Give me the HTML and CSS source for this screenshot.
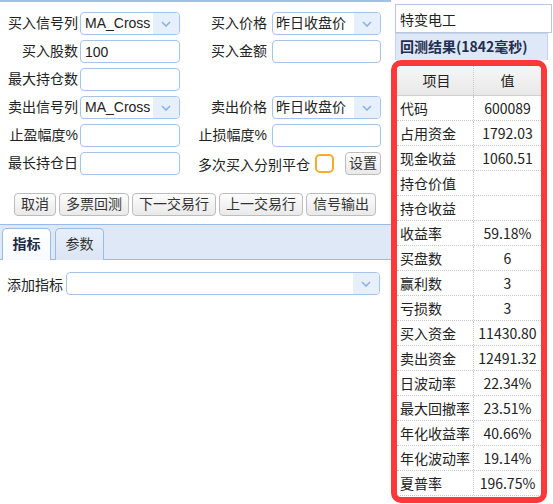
FILE: index.html
```html
<!DOCTYPE html>
<html lang="zh-CN">
<head>
    <meta charset="UTF-8">
    <title>回测</title>
    <link rel="stylesheet" href="styles.css">
</head>
<body>

    <!-- 左侧：回测参数 -->
    <div class="left-panel">
        <div class="form-grid">
            <label class="lbl">买入信号列</label>
            <div class="combo"><span class="combo-text">MA_Cross</span><span class="combo-arrow"><svg width="10" height="6" viewBox="0 0 10 6"><path d="M1 1l4 4 4-4" fill="none" stroke="#8db0de" stroke-width="1.6"/></svg></span></div>
            <label class="lbl lbl2">买入价格</label>
            <div class="combo"><span class="combo-text cn">昨日收盘价</span><span class="combo-arrow"><svg width="10" height="6" viewBox="0 0 10 6"><path d="M1 1l4 4 4-4" fill="none" stroke="#8db0de" stroke-width="1.6"/></svg></span></div>

            <label class="lbl">买入股数</label>
            <input class="field" type="text" value="100">
            <label class="lbl lbl2">买入金额</label>
            <input class="field" type="text">

            <label class="lbl">最大持仓数</label>
            <input class="field" type="text">
            <span></span>
            <span></span>

            <label class="lbl">卖出信号列</label>
            <div class="combo"><span class="combo-text">MA_Cross</span><span class="combo-arrow"><svg width="10" height="6" viewBox="0 0 10 6"><path d="M1 1l4 4 4-4" fill="none" stroke="#8db0de" stroke-width="1.6"/></svg></span></div>
            <label class="lbl lbl2">卖出价格</label>
            <div class="combo"><span class="combo-text cn">昨日收盘价</span><span class="combo-arrow"><svg width="10" height="6" viewBox="0 0 10 6"><path d="M1 1l4 4 4-4" fill="none" stroke="#8db0de" stroke-width="1.6"/></svg></span></div>

            <label class="lbl">止盈幅度%</label>
            <input class="field" type="text">
            <label class="lbl lbl2">止损幅度%</label>
            <input class="field" type="text">

            <label class="lbl">最长持仓日</label>
            <input class="field" type="text">
            <div class="multi-close">
                <span>多次买入分别平仓</span>
                <span class="check"></span>
                <button class="btn btn-set">设置</button>
            </div>
        </div>

        <div class="btn-row">
            <button class="btn">取消</button>
            <button class="btn">多票回测</button>
            <button class="btn">下一交易行</button>
            <button class="btn">上一交易行</button>
            <button class="btn">信号输出</button>
        </div>

        <!-- 标签页 -->
        <div class="tab-bar">
            <div class="tab active">指标</div>
            <div class="tab">参数</div>
        </div>

        <div class="add-row">
            <label class="add-lbl">添加指标</label>
            <div class="combo combo-wide"><span class="combo-text"></span><span class="combo-arrow"><svg width="10" height="6" viewBox="0 0 10 6"><path d="M1 1l4 4 4-4" fill="none" stroke="#8db0de" stroke-width="1.6"/></svg></span></div>
        </div>
    </div>

    <!-- 右侧：回测结果 -->
    <div class="right-panel">
        <input class="stock-name" type="text" value="特变电工">
        <div class="result-title">回测结果(1842毫秒)</div>
        <div class="result-box">
            <div class="grid-head">
                <div class="cell c1">项目</div>
                <div class="cell c2">值</div>
            </div>
            <div class="grid-body" id="resultGrid"></div>
        </div>
    </div>

    <script>
        // 回测结果数据
        const results = [
            ['代码', '600089'],
            ['占用资金', '1792.03'],
            ['现金收益', '1060.51'],
            ['持仓价值', ''],
            ['持仓收益', ''],
            ['收益率', '59.18%'],
            ['买盘数', '6'],
            ['赢利数', '3'],
            ['亏损数', '3'],
            ['买入资金', '11430.80'],
            ['卖出资金', '12491.32'],
            ['日波动率', '22.34%'],
            ['最大回撤率', '23.51%'],
            ['年化收益率', '40.66%'],
            ['年化波动率', '19.14%'],
            ['夏普率', '196.75%']
        ];

        const grid = document.getElementById('resultGrid');
        results.forEach(([name, value]) => {
            const row = document.createElement('div');
            row.className = 'grid-row';
            row.innerHTML = '<div class="cell c1">' + name + '</div><div class="cell c2">' + value + '</div>';
            grid.appendChild(row);
        });
    </script>

</body>
</html>
```

FILE: styles.css
```css
/* 基础样式 */
* {
    margin: 0;
    padding: 0;
    box-sizing: border-box;
}

body {
    width: 553px;
    height: 504px;
    overflow: hidden;
    display: flex;
    background: #fff;
    color: #222;
    font-family: 'Liberation Sans', 'Noto Sans CJK SC', sans-serif;
    font-size: 14px;
}

/* 左侧面板 */
.left-panel {
    flex: none;
    width: 391px;
    border-top: 2px solid #a3c0e8;
}

.form-grid {
    display: grid;
    grid-template-columns: 78px 100px 88px 109px;
    grid-auto-rows: 23px;
    column-gap: 2px;
    row-gap: 5px;
    padding-top: 10px;
}

.lbl {
    text-align: right;
    line-height: 23px;
    white-space: nowrap;
}

.lbl2 {
    padding-right: 3px;
}

.field {
    width: 100%;
    height: 23px;
    border: 1px solid #a6c3ea;
    border-radius: 4px;
    padding: 0 4px;
    font-family: 'Liberation Sans', 'Noto Sans CJK SC', sans-serif;
    font-size: 14px;
    color: #222;
    outline: none;
}

/* 下拉框 */
.combo {
    display: flex;
    height: 23px;
    border: 1px solid #a6c3ea;
    border-radius: 4px;
    overflow: hidden;
}

.combo-text {
    flex: 1;
    padding-left: 4px;
    line-height: 21px;
    white-space: nowrap;
}

.combo-text.cn {
    padding-left: 3px;
}

.combo-arrow {
    width: 26px;
    background: #e6f0fc;
    display: flex;
    justify-content: center;
    align-items: center;
}

.multi-close {
    grid-column: 3 / 5;
    display: flex;
    justify-content: flex-end;
    align-items: center;
    white-space: nowrap;
}

.check {
    width: 19px;
    height: 19px;
    border: 2px solid #f7aa2e;
    border-radius: 5px;
    margin-left: 5px;
    margin-right: 11px;
}

/* 按钮 */
.btn {
    height: 23px;
    padding: 0 6px;
    border: 1px solid #bdbdbd;
    border-radius: 4px;
    background: linear-gradient(#fdfdfd, #e9e9e9);
    color: #333;
    font-family: 'Liberation Sans', 'Noto Sans CJK SC', sans-serif;
    font-size: 14px;
    line-height: 21px;
}

.btn-set {
    width: 36px;
    padding: 0;
}

.btn-row {
    display: flex;
    gap: 3px;
    padding-left: 14px;
    margin-top: 18px;
}

/* 标签页 */
.tab-bar {
    display: flex;
    gap: 4px;
    margin-top: 8px;
    padding: 3px 0 0 2px;
    height: 36px;
    background: #dfe8f6;
    border-top: 1px solid #99bbe8;
    border-bottom: 1px solid #99bbe8;
}

.tab {
    width: 49px;
    height: 32px;
    border: 1px solid #99bbe8;
    border-bottom: none;
    border-radius: 5px 5px 0 0;
    text-align: center;
    line-height: 30px;
    color: #333;
    background: linear-gradient(#e8effa, #dbe5f4);
}

.tab.active {
    background: linear-gradient(#fff, #f7faff);
    font-weight: bold;
    color: #1b2a44;
}

.add-row {
    display: flex;
    align-items: center;
    margin-top: 12px;
    padding-left: 7px;
}

.add-lbl {
    width: 59px;
    white-space: nowrap;
}

.combo-wide {
    width: 314px;
}

/* 右侧面板 */
.right-panel {
    flex: 1;
    min-width: 0;
    display: flex;
    flex-direction: column;
}

.stock-name {
    min-width: 0;
    height: 29px;
    margin: 4px 1px 0 4px;
    border: 1px solid #b9c8dc;
    padding: 0 4px;
    font-family: 'Noto Sans CJK SC', sans-serif;
    font-size: 14px;
    color: #222;
    outline: none;
}

.result-title {
    height: 27px;
    margin: 0 5px 0 4px;
    padding-left: 4px;
    background: #dfe8f6;
    border: 1px solid #c3d5ee;
    border-bottom: none;
    line-height: 25px;
    font-family: 'Noto Sans CJK SC', sans-serif;
    font-weight: bold;
    color: #1e2f50;
}

/* 结果表格 */
.result-box {
    width: 156px;
    height: 443px;
    border: 6px solid #fd3838;
    border-radius: 10px;
    font-family: 'Noto Sans CJK SC', sans-serif;
    overflow: hidden;
}

.grid-head {
    display: flex;
    height: 30px;
    background: linear-gradient(#f7f7f7, #e8e8e8);
    border-bottom: 1px solid #d0d0d0;
}

.grid-head .cell {
    text-align: center;
    line-height: 29px;
}

.grid-row {
    display: flex;
    height: 25px;
    border-bottom: 1px dotted #c8c8c8;
}

.cell {
    line-height: 24px;
    white-space: nowrap;
}

.c1 {
    width: 77px;
    padding-left: 3px;
    border-right: 1px dotted #c8c8c8;
}

.c2 {
    flex: 1;
    text-align: center;
}
```
